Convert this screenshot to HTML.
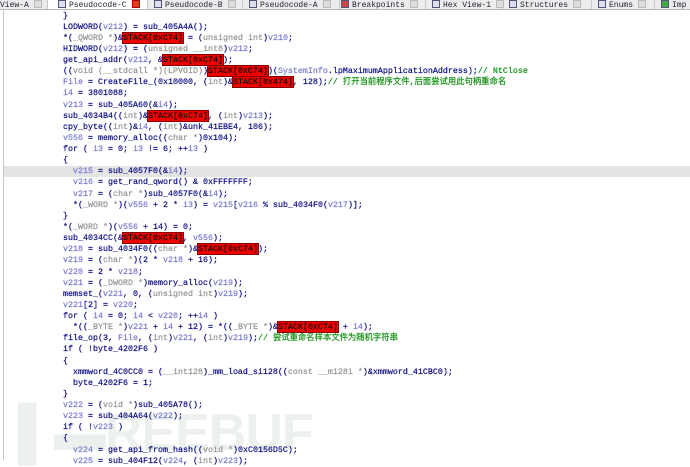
<!DOCTYPE html>
<html><head><meta charset="utf-8"><style>
body{margin:0;width:690px;height:460px;overflow:hidden;background:#fff;position:relative;font-family:"Liberation Mono","Noto Sans CJK SC",monospace;}
#tabs{position:absolute;left:0;top:0;width:690px;height:9px;background:#ececec;border-bottom:1px solid #b8b8b8;font-size:8px;line-height:9px;color:#223;z-index:2}
.tab{position:absolute;top:0;height:9px;white-space:nowrap;border-right:1px solid #c8c8c8;}
.tab i{display:inline-block;width:6px;height:6px;background:#ddd;border:1px solid #bbb;margin-left:5px;vertical-align:-1px}
.ic{display:inline-block;width:6px;height:6px;border:1px solid #557;background:#dde;margin-right:3px;vertical-align:-1px}
#gut{position:absolute;left:3px;top:10px;width:1px;height:450px;background:#c8c8c8}
#hl{position:absolute;left:4px;top:166px;width:686px;height:11px;background:#e4e4e4}
#wm{position:absolute;left:18px;top:403px;font:bold 52px "Liberation Sans",sans-serif;color:#edf1ee;letter-spacing:-1px;line-height:60px;z-index:0}
.l{position:absolute;left:63px;font-size:8.33px;line-height:11px;white-space:pre;color:#0c0c80;z-index:1;-webkit-text-stroke:0.2px currentColor}
.v{color:#7b7bcf}.t{color:#949494}.c{color:#148f14}.s{background:#f10000;color:#111;outline:1px solid #800}
</style></head><body>
<div id="tabs">
<div class="tab" style="left:0;width:47px">View-A<i></i></div>
<div class="tab" style="left:48px;width:100px;background:#fff;padding-left:10px;box-sizing:border-box"><span class="ic"></span>Pseudocode-C<i style="background:#e04020;border-color:#a00"></i></div>
<div class="tab" style="left:149px;width:94px;padding-left:5px;box-sizing:border-box"><span class="ic"></span>Pseudocode-B<i></i></div>
<div class="tab" style="left:244px;width:96px;padding-left:5px;box-sizing:border-box"><span class="ic"></span>Pseudocode-A<i></i></div>
<div class="tab" style="left:341px;width:85px;padding-left:0;box-sizing:border-box"><span class="ic" style="background:#c44"></span>Breakpoints<i></i></div>
<div class="tab" style="left:427px;width:76px;padding-left:5px;box-sizing:border-box"><span class="ic"></span>Hex View-1<i></i></div>
<div class="tab" style="left:504px;width:88px;padding-left:5px;box-sizing:border-box"><span class="ic"></span>Structures<i></i></div>
<div class="tab" style="left:593px;width:62px;padding-left:5px;box-sizing:border-box"><span class="ic"></span>Enums<i></i></div>
<div class="tab" style="left:656px;width:40px;padding-left:5px;box-sizing:border-box;border:0"><span class="ic" style="background:#4a4"></span>Imp</div>
</div>
<div id="gut"></div>
<div id="hl"></div>
<div id="wm">▌▬REEBUF</div>
<div class="l" style="top:10.5px">}</div>
<div class="l" style="top:21.6px">LODWORD(<span class="v">v212</span>) = sub_405A4A();</div>
<div class="l" style="top:32.8px">*(<span class="t">_QWORD *</span>)&amp;<span class="s">STACK[0xC74]</span> = (<span class="t">unsigned int</span>)<span class="v">v210</span>;</div>
<div class="l" style="top:43.9px">HIDWORD(<span class="v">v212</span>) = (<span class="t">unsigned __int8</span>)<span class="v">v212</span>;</div>
<div class="l" style="top:55px">get_api_addr(<span class="v">v212</span>, &amp;<span class="s">STACK[0xC74]</span>);</div>
<div class="l" style="top:66.2px">((<span class="t">void (__stdcall *)(LPVOID)</span>)<span class="s">STACK[0xC74]</span>)(<span class="v">SystemInfo</span>.lpMaximumApplicationAddress);<span class="c">// NtClose</span></div>
<div class="l" style="top:77.3px"><span class="v">File</span> = CreateFile_(0x10000, (<span class="t">int</span>)&amp;<span class="s">STACK[0x474]</span>, 128);<span class="c">// 打开当前程序文件,后面尝试用此句柄重命名</span></div>
<div class="l" style="top:88.4px"><span class="v">i4</span> = 3801088;</div>
<div class="l" style="top:99.5px"><span class="v">v213</span> = sub_405A60(&amp;<span class="v">i4</span>);</div>
<div class="l" style="top:110.7px">sub_4034B4((<span class="t">int</span>)&amp;<span class="s">STACK[0xC74]</span>, (<span class="t">int</span>)<span class="v">v213</span>);</div>
<div class="l" style="top:121.8px">cpy_byte((<span class="t">int</span>)&amp;<span class="v">i4</span>, (<span class="t">int</span>)&amp;unk_41EBE4, 106);</div>
<div class="l" style="top:132.9px"><span class="v">v556</span> = memory_alloc((<span class="t">char *</span>)0x104);</div>
<div class="l" style="top:144px">for ( <span class="v">i3</span> = 0; <span class="v">i3</span> != 6; ++<span class="v">i3</span> )</div>
<div class="l" style="top:155.2px">{</div>
<div class="l" style="top:166.3px">  <span class="v">v215</span> = sub_4057F0(&amp;<span class="v">i4</span>);</div>
<div class="l" style="top:177.4px">  <span class="v">v216</span> = get_rand_qword() &amp; 0xFFFFFFF;</div>
<div class="l" style="top:188.6px">  <span class="v">v217</span> = (<span class="t">char *</span>)sub_4057F0(&amp;<span class="v">i4</span>);</div>
<div class="l" style="top:199.7px">  *(<span class="t">_WORD *</span>)(<span class="v">v556</span> + 2 * <span class="v">i3</span>) = <span class="v">v215</span>[<span class="v">v216</span> % sub_4034F0(<span class="v">v217</span>)];</div>
<div class="l" style="top:210.8px">}</div>
<div class="l" style="top:222px">*(<span class="t">_WORD *</span>)(<span class="v">v556</span> + 14) = 0;</div>
<div class="l" style="top:233.1px">sub_4034CC(&amp;<span class="s">STACK[0xC74]</span>, <span class="v">v556</span>);</div>
<div class="l" style="top:244.2px"><span class="v">v218</span> = sub_4034F0((<span class="t">char *</span>)&amp;<span class="s">STACK[0xC74]</span>);</div>
<div class="l" style="top:255.3px"><span class="v">v219</span> = (<span class="t">char *</span>)(2 * <span class="v">v218</span> + 16);</div>
<div class="l" style="top:266.5px"><span class="v">v220</span> = 2 * <span class="v">v218</span>;</div>
<div class="l" style="top:277.6px"><span class="v">v221</span> = (<span class="t">_DWORD *</span>)memory_alloc(<span class="v">v219</span>);</div>
<div class="l" style="top:288.7px">memset_(<span class="v">v221</span>, 0, (<span class="t">unsigned int</span>)<span class="v">v219</span>);</div>
<div class="l" style="top:299.9px"><span class="v">v221</span>[2] = <span class="v">v220</span>;</div>
<div class="l" style="top:311px">for ( <span class="v">i4</span> = 0; <span class="v">i4</span> &lt; <span class="v">v220</span>; ++<span class="v">i4</span> )</div>
<div class="l" style="top:322.1px">  *((<span class="t">_BYTE *</span>)<span class="v">v221</span> + <span class="v">i4</span> + 12) = *((<span class="t">_BYTE *</span>)&amp;<span class="s">STACK[0xC74]</span> + <span class="v">i4</span>);</div>
<div class="l" style="top:333.2px">file_op(3, <span class="v">File</span>, (<span class="t">int</span>)<span class="v">v221</span>, (<span class="t">int</span>)<span class="v">v219</span>);<span class="c">// 尝试重命名样本文件为随机字符串</span></div>
<div class="l" style="top:344.4px">if ( !byte_4202F6 )</div>
<div class="l" style="top:355.5px">{</div>
<div class="l" style="top:366.6px">  xmmword_4C0CC0 = (<span class="t">__int128</span>)_mm_load_si128((<span class="t">const __m128i *</span>)&amp;xmmword_41CBC0);</div>
<div class="l" style="top:377.8px">  byte_4202F6 = 1;</div>
<div class="l" style="top:388.9px">}</div>
<div class="l" style="top:400px"><span class="v">v222</span> = (<span class="t">void *</span>)sub_405A78();</div>
<div class="l" style="top:411.1px"><span class="v">v223</span> = sub_404A64(<span class="v">v222</span>);</div>
<div class="l" style="top:422.3px">if ( !<span class="v">v223</span> )</div>
<div class="l" style="top:433.4px">{</div>
<div class="l" style="top:444.5px">  <span class="v">v224</span> = get_api_from_hash((<span class="t">void *</span>)0xC0156D5C);</div>
<div class="l" style="top:455.7px">  <span class="v">v225</span> = sub_404F12(<span class="v">v224</span>, (<span class="t">int</span>)<span class="v">v223</span>);</div>
</body></html>
